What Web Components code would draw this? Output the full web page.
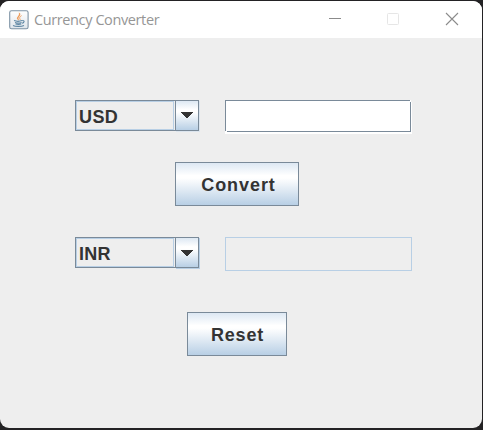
<!DOCTYPE html>
<html lang="en">
<head>
<meta charset="utf-8">
<title>Currency Converter</title>
<style>
html, body { margin: 0; height: 100%; background: #232224; overflow: hidden; }
body { font-family: "Liberation Sans", Arial, sans-serif; color: #333; }
</style>
</head>
<body>
<app-window>
  <title-bar slot="title">Currency Converter</title-bar>
  <form-row><combo-box>USD</combo-box><text-field></text-field></form-row>
  <metal-button style="--w:124px;--ls:.93px;--dx:3px;margin:28px 0 0 175px">Convert</metal-button>
  <form-row style="margin-top:31px"><combo-box style="--ay:12px;--ls:.2px;--edge:#b8cfe5">INR</combo-box><text-field disabled></text-field></form-row>
  <metal-button style="--w:100px;--ls:.75px;--dx:1px;margin:41px 0 0 187px">Reset</metal-button>
</app-window>
<script>
function define(name, markup) {
  const template = document.createElement('template');
  template.innerHTML = markup;
  customElements.define(name, class extends HTMLElement {
    constructor() {
      super();
      this.attachShadow({ mode: 'open' }).append(template.content.cloneNode(true));
    }
  });
}

define('app-window', `
<style>
:host { display: block; box-sizing: border-box; width: 483px; height: 430px; padding: 1px 1px 2px 0; }
.frame { height: 427px; background: #eee; border-radius: 9px; overflow: hidden; display: flex; flex-direction: column; }
.content { padding-top: 62px; display: flex; flex-direction: column; align-items: flex-start; }
</style>
<div class="frame"><slot name="title"></slot><div class="content"><slot></slot></div></div>`);

define('title-bar', `
<style>
:host { display: flex; box-sizing: border-box; height: 37px; flex: none; background: #fff; align-items: center; padding-left: 9px;
  font: 14.5px/20px "Open Sans", "Noto Sans", sans-serif; color: #969696; }
svg { display: block; flex: none; }
.text { flex: 1; padding-left: 5px; white-space: nowrap; letter-spacing: -.39px; }
</style>
<svg width="20" height="20" viewBox="0 0 20 20">
  <defs><linearGradient id="g" x2="0" y2="1"><stop stop-color="#fff"/><stop offset="1" stop-color="#dfe5eb"/></linearGradient></defs>
  <rect x=".7" y=".7" width="18.4" height="18" rx="1.8" fill="url(#g)" stroke="#7e93a5" stroke-width="1.1"/>
  <path d="M9.7 10.2C5.8 7.5 11.6 6 10.2 2.8c2.8 2.6-2.9 4.2-.5 7.4z" fill="#ed8b3c" stroke="#ed8b3c" stroke-width=".5"/>
  <path d="M12.6 5.6c-2.4 1.3-2.3 2.3-1.3 4.3" fill="none" stroke="#efa468" stroke-width="1"/>
  <path d="M5 10.6c2 .8 6 .8 8.2 0M6 12.4c2 .8 5 .8 6.6 0M6.5 14c2 .6 4 .6 5.8 0M13.4 10.6c2.8-.4 1.8 2.4-.4 2.7M4 15.4c2.5 1.4 8.5 1.3 11 0" fill="none" stroke="#5e86a3" stroke-width="1.1"/>
</svg>
<div class="text"><slot></slot></div>
<svg width="160" height="37" viewBox="322 1 160 37" fill="none" stroke="#8b8b8b">
  <path d="M329 18.5h12"/>
  <rect x="387.5" y="13.5" width="11" height="11" rx="1" stroke="#e6e6e6"/>
  <path d="M446 13l12 12M458 13l-12 12" stroke-width="1.1"/>
</svg>`);

define('form-row', `
<style>
:host { display: flex; align-items: flex-start; gap: 26px; height: 34px; margin-left: 75px; }
</style><slot></slot>`);

define('combo-box', `
<style>
:host { display: flex; width: 124px; height: 31px; font-weight: bold; font-size: 18px; }
.value { box-sizing: border-box; width: 100px; height: 31px; border: 1px solid #7a8a99; border-right: 0; padding-right: 1px; }
.inner { box-sizing: border-box; height: 29px; padding-left: 2px; border: 1px solid #b8cfe5; letter-spacing: var(--ls, .4px); line-height: 30px; }
.arrow { box-sizing: border-box; width: 24px; height: 31px; border: 1px solid #7a8a99;
  background: linear-gradient(#dde8f3, #fff 30%, #fff 38%, #b8cfe5); box-shadow: 1px 1px 0 var(--edge, #dce5ee); }
svg { display: block; margin: var(--ay, 11px) 0 0 5px; }
</style>
<div class="value"><div class="inner"><slot></slot></div></div>
<div class="arrow"><svg width="12" height="7" viewBox="0 0 12 7" shape-rendering="crispEdges"><path d="M0 0h12v1h-1v1h-1v1H9v1H8v1H7v1H5V5H4V4H3V3H2V2H1V1H0z" fill="#333"/></svg></div>`);

define('text-field', `
<style>
:host { display: block; box-sizing: border-box; width: 187px; height: 34px; background: #fff; }
:host([disabled]) { background: #eee; border: 1px solid #b8cfe5; }
:host([disabled]) svg { display: none; }
svg { display: block; }
</style>
<svg width="187" height="34" shape-rendering="crispEdges"><path d="M0 .5h185M.5 0v31M2 31.5h184M185.5 2v30" fill="none" stroke="#7a8a99"/><path d="M186.5 0v2" stroke="#eee"/></svg>`);

define('metal-button', `
<style>
:host { display: flex; box-sizing: border-box; width: var(--w); height: 44px; border: 1px solid #7a8a99; align-items: center; justify-content: center;
  background: linear-gradient(#dde8f3, #fff 30%, #fff 36%, #b8cfe5); font-weight: bold; font-size: 18px; letter-spacing: var(--ls); line-height: 20px; }
span { padding: 2px 0 0 var(--dx); }
</style><span><slot></slot></span>`);
</script>
</body>
</html>
